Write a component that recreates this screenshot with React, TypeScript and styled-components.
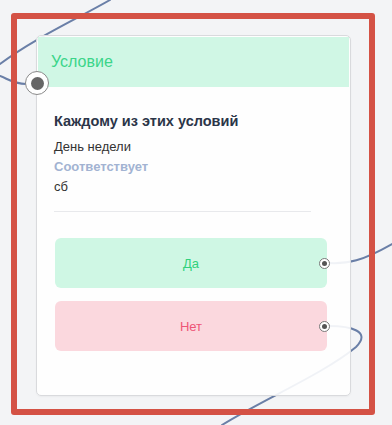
import React from "react";
import styled, { createGlobalStyle } from "styled-components";

const GlobalStyle = createGlobalStyle`
  html, body {
    margin: 0;
    padding: 0;
    background: #f3f4f6;
  }
  * {
    box-sizing: border-box;
  }
`;

interface IEdge {
  id: string;
  d: string;
}

const edges: IEdge[] = [
  { id: "top", d: "M 110 0 C 75 20, 35 38, 0 64" },
  { id: "in", d: "M 0 76 C 8 79, 14 84, 26 84" },
  { id: "yes", d: "M 329 263 C 348 264, 362 261, 392 244" },
  {
    id: "no",
    d: "M 329 326 C 350 326, 372 331, 356 347 C 325 373, 262 400, 222 425",
  },
];

const App = () => {
  return (
    <Canvas>
      <GlobalStyle />
      <Edges width="392" height="425" viewBox="0 0 392 425">
        {edges.map((edge) => (
          <path
            key={`EdgeKey-${edge.id}`}
            d={edge.d}
            fill="none"
            stroke="#6a7fa7"
            strokeWidth="2"
            strokeLinecap="round"
          />
        ))}
      </Edges>
      <Frame>
        <Card>
          <InHandle />
          <Header>Условие</Header>
          <Body>
            <Title>Каждому из этих условий</Title>
            <Row>День недели</Row>
            <Row $accent>Соответствует</Row>
            <Row>сб</Row>
            <Divider />
          </Body>
          <Branches>
            <Branch $variant="yes">
              Да
              <OutHandle />
            </Branch>
            <Branch $variant="no">
              Нет
              <OutHandle />
            </Branch>
          </Branches>
        </Card>
      </Frame>
    </Canvas>
  );
};

export default App;

const Canvas = styled.div`
  position: relative;
  width: 392px;
  height: 425px;
  overflow: hidden;
  background: #f3f4f6;
  padding: 13px 0 0 11px;
  font-family: "Liberation Sans", Arial, sans-serif;
`;

const Edges = styled.svg`
  position: absolute;
  left: 0;
  top: 0;
`;

const Frame = styled.div`
  position: relative;
  width: 364px;
  height: 402px;
  border: 6px solid #d45245;
  border-radius: 3px;
  padding: 16px 18px 13px 19px;
`;

const Card = styled.div`
  position: relative;
  width: 315px;
  height: 361px;
  padding: 1px;
  border: 1px solid #d9dadd;
  border-radius: 5px;
  background: rgba(255, 255, 255, 0.9);
  box-shadow: 0 1px 2px rgba(0, 0, 0, 0.04);
`;

const InHandle = styled.div`
  position: absolute;
  left: -12px;
  top: 35px;
  width: 24px;
  height: 24px;
  border-radius: 50%;
  border: 1.5px solid #8a8a8a;
  background: #fff;

  &::after {
    content: "";
    position: absolute;
    left: 50%;
    top: 50%;
    width: 13px;
    height: 13px;
    margin: -6.5px 0 0 -6.5px;
    border-radius: 50%;
    background: #666;
  }
`;

const Header = styled.div`
  display: flex;
  align-items: center;
  height: 50px;
  padding-left: 13px;
  background: #d0f7e5;
  color: #3bd58a;
  font-size: 16px;
`;

const Body = styled.div`
  padding: 25px 38px 0 16px;
`;

const Title = styled.div`
  font-size: 14.5px;
  line-height: 18px;
  font-weight: bold;
  color: #2b3548;
  margin-bottom: 7px;
`;

const Row = styled.div<{ $accent?: boolean }>`
  font-size: 13px;
  line-height: 20px;
  color: ${(p) => (p.$accent ? "#a2b3d2" : "#333")};
  font-weight: ${(p) => (p.$accent ? "bold" : "normal")};
`;

const Divider = styled.div`
  margin-top: 14px;
  height: 1px;
  background: #e8e9ec;
`;

const Branches = styled.div`
  display: flex;
  flex-direction: column;
  gap: 13px;
  padding: 26px 22px 0 17px;
`;

const Branch = styled.div<{ $variant: "yes" | "no" }>`
  position: relative;
  display: flex;
  align-items: center;
  justify-content: center;
  height: 50px;
  border-radius: 6px;
  font-size: 13px;
  background: ${(p) => (p.$variant === "yes" ? "#cff7e4" : "#fbd8de")};
  color: ${(p) => (p.$variant === "yes" ? "#2fd17c" : "#ee5577")};
`;

const OutHandle = styled.div`
  position: absolute;
  right: -3px;
  top: 50%;
  width: 11px;
  height: 11px;
  margin-top: -5.5px;
  border-radius: 50%;
  border: 1.5px solid #7a7a7a;
  background: #fff;

  &::after {
    content: "";
    position: absolute;
    left: 50%;
    top: 50%;
    width: 5px;
    height: 5px;
    margin: -2.5px 0 0 -2.5px;
    border-radius: 50%;
    background: #555;
  }
`;
